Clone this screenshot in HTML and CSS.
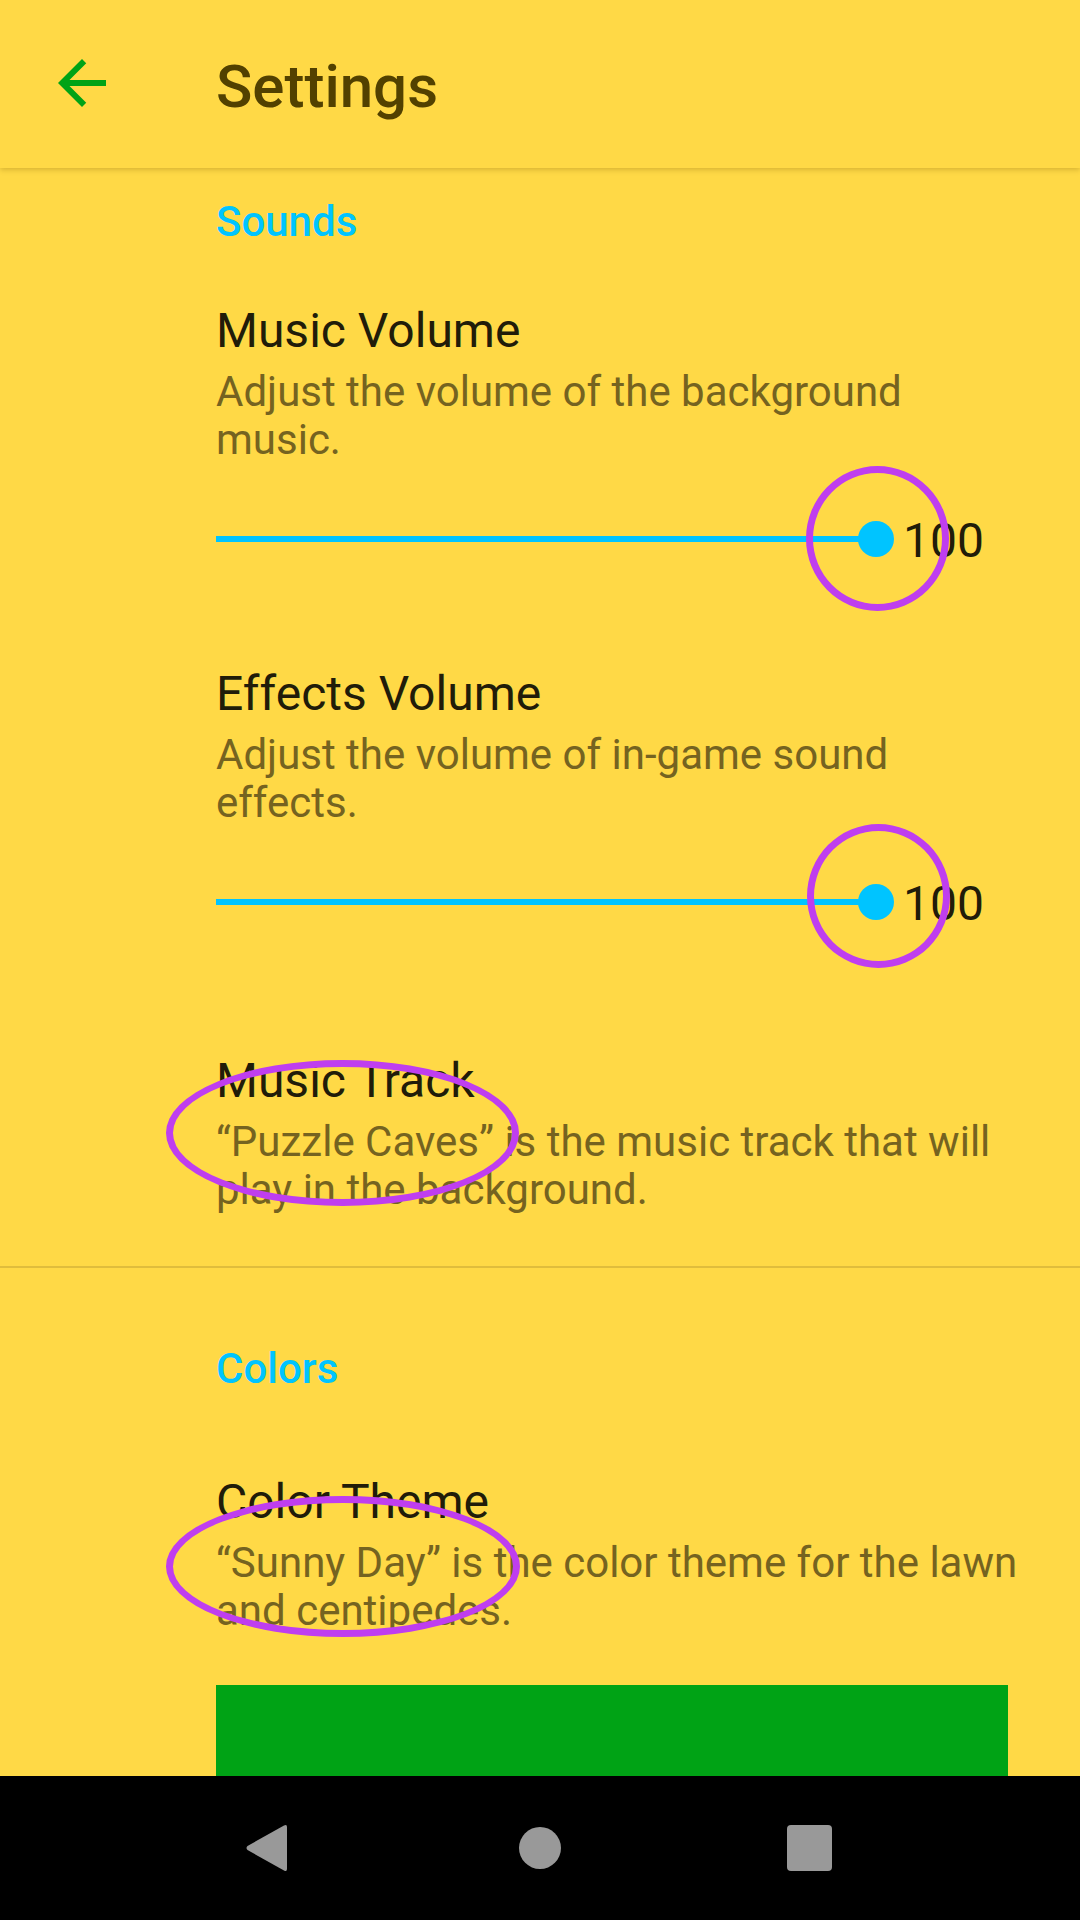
FILE: index.html
```html
<!DOCTYPE html>
<html>
<head>
<meta charset="utf-8">
<link rel="stylesheet" href="styles.css">
</head>
<body>
<div class="screen">
  <header class="appbar">
    <svg class="back" viewBox="0 0 24 24" width="72" height="72"><path fill="#00A316" d="M20 11H7.83l5.59-5.59L12 4l-8 8 8 8 1.41-1.41L7.83 13H20v-2z"/></svg>
    <div class="title">Settings</div>
  </header>
  <main class="content">
    <section class="group">
      <div class="category cat-sounds">Sounds</div>
      <div class="pref pref-first">
        <div class="pref-title">Music Volume</div>
        <div class="pref-summary">Adjust the volume of the background music.</div>
        <div class="slider">
          <div class="track"><div class="thumb"></div></div>
          <div class="value">100</div>
        </div>
      </div>
      <div class="pref pref-next">
        <div class="pref-title">Effects Volume</div>
        <div class="pref-summary">Adjust the volume of in-game sound effects.</div>
        <div class="slider">
          <div class="track"><div class="thumb"></div></div>
          <div class="value">100</div>
        </div>
      </div>
      <div class="pref pref-track">
        <div class="pref-title">Music Track</div>
        <div class="pref-summary">“Puzzle Caves” is the music track that will play in the background.</div>
      </div>
    </section>
    <div class="divider"></div>
    <section class="group">
      <div class="category cat-colors">Colors</div>
      <div class="pref pref-theme">
        <div class="pref-title">Color Theme</div>
        <div class="pref-summary">“Sunny Day” is the color theme for the lawn and centipedes.</div>
        <div class="swatch"></div>
      </div>
    </section>
  </main>
  <nav class="navbar">
    <svg class="nav-back" width="41" height="48" viewBox="0 0 41 48"><path fill="#999999" d="M38 1.5 Q41 0 41 3 L41 45 Q41 48 38 46.5 L1.5 26 Q-0.5 24 1.5 22 Z"/></svg>
    <div class="nav-home"></div>
    <div class="nav-recent"></div>
  </nav>
  <div class="marks">
    <div class="mark m1"></div>
    <div class="mark m2"></div>
    <div class="mark m3"></div>
    <div class="mark m4"></div>
  </div>
</div>
</body>
</html>
```

FILE: styles.css
```css
html, body {
  margin: 0;
  padding: 0;
}
body {
  width: 1080px;
  height: 1920px;
  overflow: hidden;
  font-family: Roboto, "Noto Sans", sans-serif;
  background: #FFD946;
}
.screen {
  position: relative;
  width: 1080px;
  height: 1920px;
  display: flex;
  flex-direction: column;
  background: #FFD946;
}
.appbar {
  position: relative;
  z-index: 2;
  flex: 0 0 168px;
  display: flex;
  align-items: flex-start;
  padding-left: 46px;
  background: #FFD946;
  box-shadow: 0 2px 5px rgba(120, 90, 0, 0.28);
}
.back {
  margin-top: 47px;
  flex: 0 0 72px;
}
.title {
  margin-left: 98px;
  margin-top: 52px;
  font-size: 60px;
  line-height: 70px;
  font-weight: 500;
  color: #524100;
}
.content {
  flex: 1 1 auto;
  overflow: hidden;
  position: relative;
  z-index: 1;
}
.group {
  padding-left: 216px;
  padding-right: 58px;
  display: flex;
  flex-direction: column;
}
.category {
  font-size: 42px;
  line-height: 48px;
  font-weight: 500;
  color: #00C4FF;
}
.cat-sounds { margin-top: 30px; }
.cat-colors { margin-top: 77px; }
.pref {
  display: flex;
  flex-direction: column;
}
.pref-first { margin-top: 57px; }
.pref-next { margin-top: 91px; }
.pref-track { margin-top: 115px; }
.pref-theme { margin-top: 81px; }
.pref-title {
  font-size: 48px;
  line-height: 56px;
  color: #211C09;
}
.pref-summary {
  margin-top: 9px;
  font-size: 42px;
  line-height: 48px;
  color: #756320;
}
.slider {
  margin-top: 39px;
  height: 72px;
  display: flex;
  align-items: center;
}
.track {
  position: relative;
  width: 660px;
  height: 6px;
  background: #00C4FF;
}
.thumb {
  position: absolute;
  right: -18px;
  top: -15px;
  width: 36px;
  height: 36px;
  border-radius: 50%;
  background: #00C4FF;
}
.value {
  margin-left: 27px;
  margin-top: 3px;
  font-size: 48px;
  line-height: 56px;
  color: #211C09;
}
.divider {
  margin-top: 52px;
  height: 2px;
  background: #E0BD3C;
}
.swatch {
  margin-top: 50px;
  width: 792px;
  height: 300px;
  background: #00A315;
}
.navbar {
  position: relative;
  z-index: 3;
  flex: 0 0 144px;
  background: #000;
  display: flex;
  align-items: flex-start;
  padding-left: 246px;
}
.nav-back {
  margin-top: 48px;
  flex: 0 0 41px;
}
.nav-home {
  margin-top: 51px;
  margin-left: 232px;
  width: 42px;
  height: 42px;
  border-radius: 50%;
  background: #999999;
}
.nav-recent {
  margin-top: 49px;
  margin-left: 226px;
  width: 45px;
  height: 46px;
  border-radius: 4px;
  background: #999999;
}
.marks {
  position: absolute;
  inset: 0;
  z-index: 5;
  pointer-events: none;
}
.mark {
  position: absolute;
  box-sizing: border-box;
  border: 7px solid #BF3EEF;
  border-radius: 50%;
}
.m1 { left: 806px; top: 466px; width: 143px; height: 145px; }
.m2 { left: 807px; top: 824px; width: 143px; height: 144px; }
.m3 { left: 166px; top: 1060px; width: 353px; height: 146px; }
.m4 { left: 166px; top: 1496px; width: 354px; height: 141px; }
```
